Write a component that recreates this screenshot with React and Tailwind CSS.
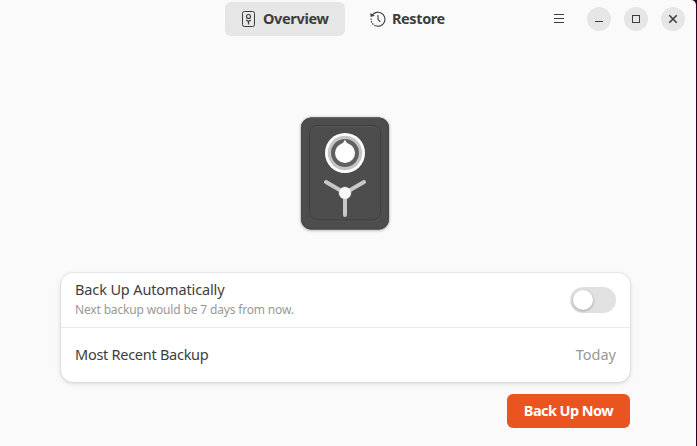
import React from "react";

function SafeGlyph() {
  return (
    <svg width="16" height="16" viewBox="0 0 16 16" fill="none" stroke="#3d3d3d">
      <rect x="1.500" y="0.500" width="12" height="15" rx="1.800" strokeWidth="1" />
      <circle cx="7.500" cy="5.500" r="2" strokeWidth="1.100" />
      <path d="M5.200 9 7.500 10.500 9.800 9M7.500 10.500V13.500" strokeWidth="1.200" />
    </svg>
  );
}

function HistoryGlyph() {
  return (
    <svg width="16" height="16" viewBox="0 0 16 16" fill="none" stroke="#3d3d3d">
      <path d="M2.200 4.200A7 7 0 1 1 5.500 14.800" strokeWidth="1.100" />
      <path d="M5.500 14.800A7 7 0 0 1 1.100 7.500" strokeWidth="1.100" strokeDasharray="1.500 1" />
      <path d="M0.300 2 0.600 6 4.800 4.800Z" fill="#3d3d3d" stroke="none" />
      <path d="M8 4V8.300L10.300 10.800" strokeWidth="1.100" />
    </svg>
  );
}

function Safe() {
  return (
    <svg width="101" height="124" viewBox="295 111 101 124" className="block">
      <defs>
        <filter id="safeShadow" x="-10%" y="-10%" width="120%" height="120%">
          <feDropShadow dx="0" dy="0.500" stdDeviation="1.400" floodColor="#000" floodOpacity="0.450" />
        </filter>
      </defs>
      <rect x="301" y="117.500" width="88" height="112" rx="10" fill="#4d4d4d" filter="url(#safeShadow)" />
      <rect x="301.500" y="118" width="87" height="111" rx="9.500" fill="none" stroke="#474747" />
      <path d="M310 118H380" stroke="#5c5c5c" />
      <rect x="309.500" y="126.500" width="71" height="94.500" rx="7.500" fill="none" stroke="#585858" />
      <rect x="309.500" y="125.500" width="71" height="94.500" rx="7.500" fill="none" stroke="#3e3e3e" />
      <circle cx="345" cy="153" r="20" fill="#fff" />
      <circle cx="345" cy="153" r="17.300" fill="#c6c6c6" />
      <circle cx="345" cy="153" r="14" fill="#606060" />
      <circle cx="345" cy="153" r="10" fill="#fff" />
      <path d="M345 139.500C345.800 141.800 347 143 349 144.500H341C343 143 344.200 141.800 345 139.500Z" fill="#fff" />
      <path d="M345 193 326 182M345 193 364 182M345 193V215" stroke="#c8c8c8" strokeWidth="4" strokeLinecap="round" />
      <circle cx="345" cy="193" r="6" fill="#f7f7f7" stroke="#d8d8d8" strokeWidth="0.500" />
    </svg>
  );
}

function WindowButton({ label, children }) {
  return (
    <button aria-label={label} className="flex h-6 w-6 items-center justify-center rounded-full bg-[#e6e6e6]">
      <svg width="16" height="16" viewBox="0 0 16 16" fill="none" stroke="#3d3d3d" strokeWidth="1">
        {children}
      </svg>
    </button>
  );
}

export default function App() {
  return (
    <div className="h-[446px] w-[697px] overflow-hidden bg-[#2c001e] pr-px font-['Noto_Sans',sans-serif] text-[#3d3d3d]">
      <div className="flex h-full w-full flex-col rounded-tr-[5px] bg-[#fafafa]">
        <header className="flex h-[38px] shrink-0 items-center pl-[225px] pr-[11px]">
          <button className="flex h-[34px] w-[120px] items-center gap-1.5 rounded-md bg-[#e6e6e6] pl-4">
            <SafeGlyph />
            <span className="whitespace-nowrap pb-0.5 text-[14.5px] font-bold leading-5 tracking-[-0.35px]">Overview</span>
          </button>
          <button className="ml-[25px] flex h-[34px] items-center gap-1.5">
            <HistoryGlyph />
            <span className="whitespace-nowrap pb-0.5 text-[14.5px] font-bold leading-5 tracking-[-0.4px]">Restore</span>
          </button>
          <div className="ml-auto flex items-center gap-[13px]">
            <button aria-label="Menu" className="mr-[7px] flex h-4 w-4">
              <svg width="16" height="16" viewBox="0 0 16 16" stroke="#3d3d3d" strokeWidth="1">
                <path d="M3 3.500h10M3 7.500h10M3 11.500h10" />
              </svg>
            </button>
            <WindowButton label="Minimize">
              <path d="M4 10.500h8" />
            </WindowButton>
            <WindowButton label="Maximize">
              <rect x="4.500" y="4.500" width="7" height="7" />
            </WindowButton>
            <WindowButton label="Close">
              <path d="m4.300 4.300 7.400 7.400M11.700 4.300l-7.400 7.400" strokeWidth="1.600" />
            </WindowButton>
          </div>
        </header>
        <main className="flex flex-1 flex-col pl-[61px] pr-[66px] pt-[73px]">
          <div className="flex justify-center">
            <Safe />
          </div>
          <section className="mt-[38px] h-[109px] rounded-xl bg-white shadow-[0_0_0_1px_rgba(0,0,0,0.04),0_1px_3px_1px_rgba(0,0,0,0.08),0_2px_6px_2px_rgba(0,0,0,0.03)]">
            <div className="flex h-[55px] items-center justify-between border-b border-[#ebebeb] px-3.5">
              <div>
                <p className="-mt-0.5 mb-0.5 whitespace-nowrap text-[14.5px] leading-5 tracking-[-0.13px]">Back Up Automatically</p>
                <p className="whitespace-nowrap text-xs leading-[18px] tracking-[-0.16px] text-[#989898]">Next backup would be 7 days from now.</p>
              </div>
              <button role="switch" aria-checked="false" aria-label="Back Up Automatically" className="flex h-[26px] w-[46px] items-center rounded-full bg-[#e1e1e1] pl-[3px]">
                <span className="h-5 w-5 rounded-full bg-white shadow-[0_1px_3px_rgba(0,0,0,0.3)]" />
              </button>
            </div>
            <div className="flex h-[54px] items-center justify-between px-3.5 pb-0.5 text-[14.5px] leading-5">
              <span className="tracking-[-0.27px]">Most Recent Backup</span>
              <span className="text-[#989898]">Today</span>
            </div>
          </section>
          <button className="mt-3 h-[34px] w-[123px] self-end rounded-md bg-[#e95420] pb-0.5 text-center text-[14.5px] font-bold leading-5 tracking-[-0.55px] text-white">
            Back Up Now
          </button>
        </main>
      </div>
    </div>
  );
}
